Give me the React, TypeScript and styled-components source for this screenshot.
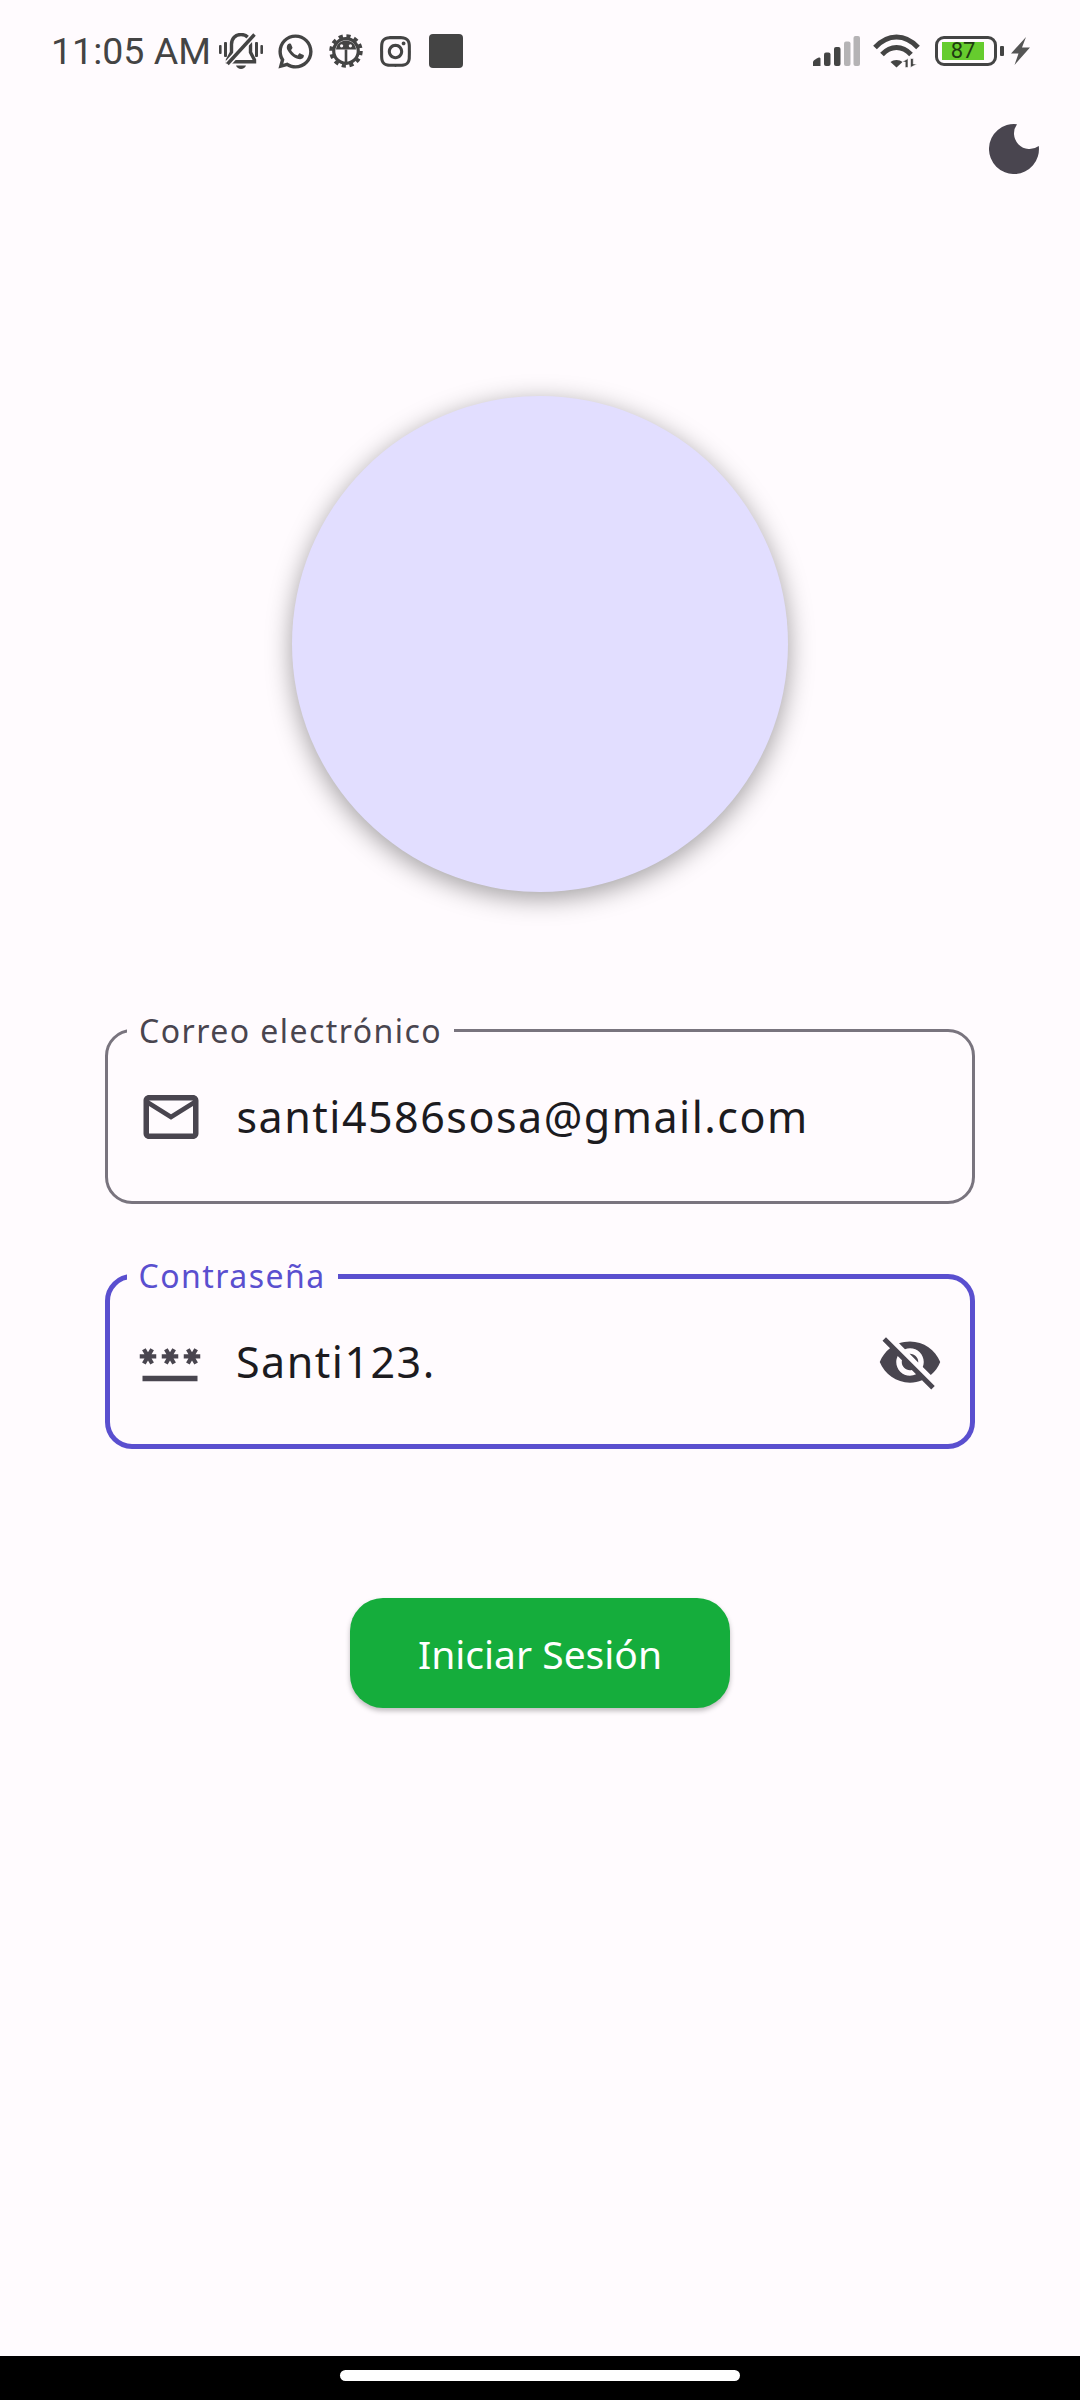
import React from "react";
import styled, { createGlobalStyle } from "styled-components";
import { RiWhatsappLine, RiInstagramLine } from "react-icons/ri";

const Global = createGlobalStyle`
  html, body { margin: 0; padding: 0; background: #fffbfe; }
`;

const Page = styled.div`
  width: 1080px;
  height: 2400px;
  display: flex;
  flex-direction: column;
  align-items: center;
  background: #fffbfe;
  font-family: "Noto Sans", "Open Sans", sans-serif;
  overflow: hidden;
`;

const StatusBar = styled.div`
  align-self: stretch;
  height: 102px;
  box-sizing: border-box;
  padding: 0 50px 0 51px;
  display: flex;
  align-items: center;
  color: #444444;
  flex-shrink: 0;
`;

const Time = styled.span`
  font-family: "Roboto", sans-serif;
  font-size: 37.5px;
  line-height: 40px;
  font-weight: 400;
  margin-right: 8px;
  white-space: nowrap;
`;

const LeftIcons = styled.div`
  display: flex;
  align-items: center;
  gap: 16px;
`;

const Slot = styled.div`
  width: 34px;
  height: 34px;
  display: flex;
  align-items: center;
  justify-content: center;
  flex-shrink: 0;
  & > svg { flex-shrink: 0; }
`;

const SolidSquare = styled.div`
  width: 34px;
  height: 34px;
  border-radius: 4px;
  background: #444444;
`;

const RightIcons = styled.div`
  margin-left: auto;
  display: flex;
  align-items: center;
`;

const Signal = styled.svg`
  margin-right: 13px;
`;

const Wifi = styled.svg`
  margin-right: 15px;
`;

const BatteryBody = styled.div`
  width: 62px;
  height: 30px;
  box-sizing: border-box;
  border: 3px solid #444444;
  border-radius: 9px;
  padding: 3px 10px 3px 4px;
  display: flex;
`;

const BatteryFill = styled.div`
  flex: 1;
  background: #66cc2e;
  color: #1f3a12;
  font-family: "Roboto", sans-serif;
  font-size: 22px;
  line-height: 18px;
  text-align: center;
`;

const BatteryTip = styled.div`
  width: 4px;
  height: 10px;
  margin: 0 7px 0 3px;
  border-radius: 1px;
  background: #444444;
`;

const MoonRow = styled.div`
  align-self: stretch;
  display: flex;
  justify-content: flex-end;
  padding: 22px 41px 0 0;
`;

const Avatar = styled.div`
  width: 496px;
  height: 496px;
  margin-top: 222px;
  border-radius: 50%;
  background: #e2deff;
  box-shadow: 0 6px 26px rgba(0, 0, 0, 0.38);
  flex-shrink: 0;
`;

const Form = styled.div`
  width: 870px;
  margin-top: 137px;
  display: flex;
  flex-direction: column;
  gap: 70px;
`;

const Field = styled.div<{ $focused?: boolean }>`
  position: relative;
  height: 175px;
  box-sizing: border-box;
  border: ${(p) => (p.$focused ? "5.5px solid #5a4fcf" : "3px solid #79747e")};
  border-radius: 27px;
  display: flex;
  align-items: center;
  padding: 0 ${(p) => (p.$focused ? "27px" : "30px")} 0 ${(p) => (p.$focused ? "27px" : "29.5px")};
`;

const FieldLabel = styled.label<{ $focused?: boolean }>`
  position: absolute;
  left: ${(p) => (p.$focused ? "16.5px" : "19px")};
  top: ${(p) => (p.$focused ? "-24px" : "-22px")};
  padding: 0 12px;
  background: #fffbfe;
  color: ${(p) => (p.$focused ? "#5a4fcf" : "#49454f")};
  font-size: 32px;
  line-height: 42px;
  letter-spacing: 1.45px;
`;

const FieldIcon = styled.svg`
  width: 66px;
  height: 66px;
  fill: #49454f;
  flex-shrink: 0;
`;

const FieldText = styled.span`
  margin-left: 33px;
  flex: 1;
  font-size: 43px;
  line-height: 56px;
  letter-spacing: 1.5px;
  color: #1c1b1f;
`;

const LoginButton = styled.button`
  width: 380px;
  height: 110px;
  margin-top: 149px;
  border: none;
  border-radius: 33px;
  background: #15ad3c;
  color: #ffffff;
  font-family: inherit;
  font-size: 39px;
  font-weight: 400;
  box-shadow: 0 3px 5px rgba(0, 0, 0, 0.25);
  flex-shrink: 0;
`;

const NavBar = styled.div`
  align-self: stretch;
  margin-top: auto;
  height: 44px;
  background: #000000;
  display: flex;
  justify-content: center;
  padding-top: 14px;
  box-sizing: border-box;
  flex-shrink: 0;
`;

const NavPill = styled.div`
  width: 400px;
  height: 11px;
  border-radius: 6px;
  background: #ffffff;
`;

const BellOff = () => (
  <svg width="44" height="37" viewBox="0 0 44 37" fill="#444444" style={{ flexShrink: 0, marginRight: 16 }}>
    <rect x="0" y="12" width="2.6" height="9" rx="1" />
    <rect x="5" y="9" width="3" height="15" rx="1" />
    <rect x="36" y="9" width="3" height="15" rx="1" />
    <rect x="41.4" y="12" width="2.6" height="9" rx="1" />
    <path d="M22 1.5c-5.6 0-9.5 4-9.5 9.8v8L8.5 27v1.8h27V27l-4-7.7v-8c0-5.8-3.9-9.8-9.5-9.8z" fill="none" stroke="#444444" strokeWidth="3.4" />
    <path d="M17 32.5h10c-.8 2-2.7 3.5-5 3.5s-4.2-1.500-5-3.500z" />
    <path d="M8.500 31 35.500 1.500" stroke="#fffbfe" strokeWidth="6.500" />
    <path d="M8.500 31 35.500 1.500" stroke="#444444" strokeWidth="3.400" />
  </svg>
);

const GearBug = () => (
  <svg width="34" height="34" viewBox="0 0 34 34">
    <circle cx="17" cy="17" r="15" fill="none" stroke="#444444" strokeWidth="3.500" strokeDasharray="4.200 3.650" />
    <circle cx="17" cy="17" r="12.300" fill="none" stroke="#444444" strokeWidth="3.200" />
    <path d="M7 15.500c.5-5.500 4.800-9 10-9s9.500 3.500 10 9z" fill="#444444" />
    <circle cx="12.600" cy="11.800" r="1.600" fill="#fffbfe" />
    <circle cx="21.400" cy="11.800" r="1.600" fill="#fffbfe" />
    <rect x="15.700" y="15.500" width="2.600" height="13" fill="#444444" />
  </svg>
);

const WifiIcon = () => (
  <Wifi width="47" height="34" viewBox="0 0 47 34">
    <g fill="none" stroke="#444444" strokeWidth="5">
      <path d="M2 13.500C8 7 15 3 23.500 3S39 7 45 13.500" />
      <path d="M9 20.500c4-4.300 9-7 14.500-7s10.500 2.700 14.500 7" />
    </g>
    <path d="M23.500 33.500l-6-5.500c1.500-1.300 3.600-2 6-2s4.500.7 6 2z" fill="#444444" />
    <path d="M35 24.500v9h-2.800v-5.500H29zM37.500 24.500h2.800v5.500h3.700l-6.500 3.500z" fill="#444444" stroke="#fffbfe" strokeWidth=".6" />
  </Wifi>
);

const Moon = () => (
  <svg width="50" height="50" viewBox="0 0 50 50" fill="#49454f">
    <path d="M28 .2A25 25 0 1 0 49.800 22 15.600 15.600 0 0 1 28 .2z" />
  </svg>
);

const App = () => (
  <Page>
    <Global />
    <StatusBar>
      <Time>11:05 AM</Time>
      <BellOff />
      <LeftIcons>
        <Slot><RiWhatsappLine size={41} color="#444444" /></Slot>
        <Slot><GearBug /></Slot>
        <Slot><RiInstagramLine size={37} color="#444444" /></Slot>
        <SolidSquare />
      </LeftIcons>
      <RightIcons>
        <Signal width="47" height="30" viewBox="0 0 47 30">
          <path d="M0 30v-4c0-1.500 4-4 6-4.500 1 0 1.500.5 1.500 1.500v7z" fill="#444444" />
          <rect x="11" y="16.500" width="6.500" height="13.500" rx="2" fill="#444444" />
          <rect x="21" y="11" width="6.500" height="19" rx="2" fill="#444444" />
          <rect x="31" y="5.500" width="6.500" height="24.500" rx="2" fill="#b5b3b5" />
          <rect x="40.500" y="0" width="6.500" height="30" rx="2" fill="#b5b3b5" />
        </Signal>
        <WifiIcon />
        <BatteryBody><BatteryFill>87</BatteryFill></BatteryBody>
        <BatteryTip />
        <svg width="19" height="28" viewBox="0 0 19 28" fill="#555555">
          <path d="M15 0 0 16.500h7.500L3.500 28 19 10.500h-8z" />
        </svg>
      </RightIcons>
    </StatusBar>
    <MoonRow><Moon /></MoonRow>
    <Avatar />
    <Form>
      <Field>
        <FieldLabel>Correo electrónico</FieldLabel>
        <FieldIcon viewBox="0 0 24 24">
          <path d="M20 4H4c-1.100 0-2 .9-2 2v12c0 1.100.9 2 2 2h16c1.100 0 2-.9 2-2V6c0-1.100-.9-2-2-2zm0 14H4V8l8 5 8-5v10zm-8-7L4 6h16l-8 5z" />
        </FieldIcon>
        <FieldText>santi4586sosa@gmail.com</FieldText>
      </Field>
      <Field $focused>
        <FieldLabel $focused>Contraseña</FieldLabel>
        <FieldIcon viewBox="0 0 24 24">
          <path d="M2 17h20v2H2zm1.150-4.050L4 11.470l.85 1.480 1.300-.75-.85-1.480H7v-1.500H5.300l.85-1.470L4.850 7 4 8.470 3.150 7l-1.300.75.85 1.470H1v1.500h1.700l-.85 1.480 1.300.75zm6.700-.75 1.300.75.85-1.480.85 1.480 1.300-.75-.85-1.480H15v-1.500h-1.700l.85-1.470-1.300-.75L12 8.470 11.150 7l-1.300.75.85 1.470H9v1.500h1.700l-.85 1.480zM23 9.220h-1.700l.85-1.470-1.300-.75L20 8.470 19.150 7l-1.300.75.85 1.470H17v1.500h1.700l-.85 1.480 1.300.75.85-1.480.85 1.480 1.300-.75-.85-1.480H23v-1.500z" />
        </FieldIcon>
        <FieldText>Santi123.</FieldText>
        <FieldIcon viewBox="0 0 24 24">
          <path d="M12 7c2.760 0 5 2.240 5 5 0 .65-.13 1.260-.36 1.830l2.920 2.920c1.510-1.260 2.700-2.890 3.430-4.750-1.730-4.390-6-7.500-11-7.500-1.400 0-2.740.25-3.980.7l2.160 2.160C10.740 7.130 11.350 7 12 7zM2 4.270l2.280 2.280.46.46C3.080 8.300 1.780 10.020 1 12c1.730 4.390 6 7.500 11 7.500 1.550 0 3.030-.3 4.380-.84l.42.42L19.730 22 21 20.730 3.270 3 2 4.270zM7.530 9.800l1.550 1.550c-.05.21-.08.43-.08.65 0 1.660 1.340 3 3 3 .22 0 .44-.03.65-.08l1.550 1.550c-.67.33-1.410.53-2.200.53-2.760 0-5-2.240-5-5 0-.79.2-1.530.53-2.200zm4.310-.78l3.150 3.150.02-.16c0-1.660-1.340-3-3-3l-.17.01z" />
        </FieldIcon>
      </Field>
    </Form>
    <LoginButton>Iniciar Sesión</LoginButton>
    <NavBar><NavPill /></NavBar>
  </Page>
);

export default App;
